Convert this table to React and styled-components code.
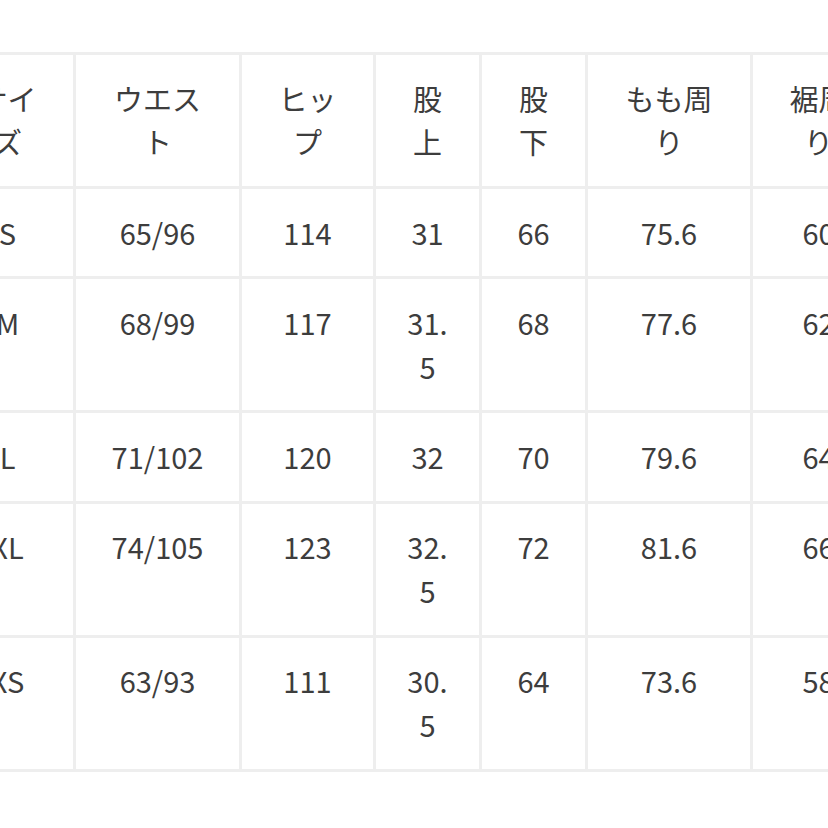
import React from 'react';
import styled, { createGlobalStyle } from 'styled-components';

/**
 * Page reset.
 */
const GlobalStyle = createGlobalStyle`
	html, body {
		margin: 0;
		padding: 0;
		background: #ffffff;
		overflow: hidden;
	}
	body {
		font-family: "Noto Sans CJK JP", "Noto Sans", sans-serif;
		color: #3d3d3d;
	}
`;

/**
 * The page wrapper, the table runs off both sides.
 */
const Page = styled.div`
	width: 828px;
	height: 828px;
	overflow: hidden;
	padding-top: 52px;
	box-sizing: border-box;
`;

/**
 * The size table: a grid whose gaps draw the rules.
 */
const SizeTable = styled.div`
	display: grid;
	grid-template-columns: 131px 163px 131px 103px 103px 162px 131px;
	gap: 3px;
	padding: 3px;
	margin-left: -61px;
	width: max-content;
	background: #eeeeee;
`;

/**
 * One cell of the table.
 */
const Cell = styled.div`
	background: #ffffff;
	padding: 21.5px 26px 22px;
	font-size: 29px;
	font-weight: 400;
	line-height: 43.75px;
	text-align: center;
	word-break: break-all;
`;

const header = ['サイズ', 'ウエスト', 'ヒップ', '股上', '股下', 'もも周り', '裾周り'];

const rows = [
	['S', '65/96', '114', '31', '66', '75.6', '60'],
	['M', '68/99', '117', '31.5', '68', '77.6', '62'],
	['L', '71/102', '120', '32', '70', '79.6', '64'],
	['XL', '74/105', '123', '32.5', '72', '81.6', '66'],
	['XS', '63/93', '111', '30.5', '64', '73.6', '58'],
];

export default function App() {
	return (
		<>
			<GlobalStyle />
			<Page>
				<SizeTable>
					{header.map((label) => <Cell key={label}>{label}</Cell>)}
					{rows.map((row) =>
						row.map((value, i) => <Cell key={row[0] + i}>{value}</Cell>)
					)}
				</SizeTable>
			</Page>
		</>
	);
}
